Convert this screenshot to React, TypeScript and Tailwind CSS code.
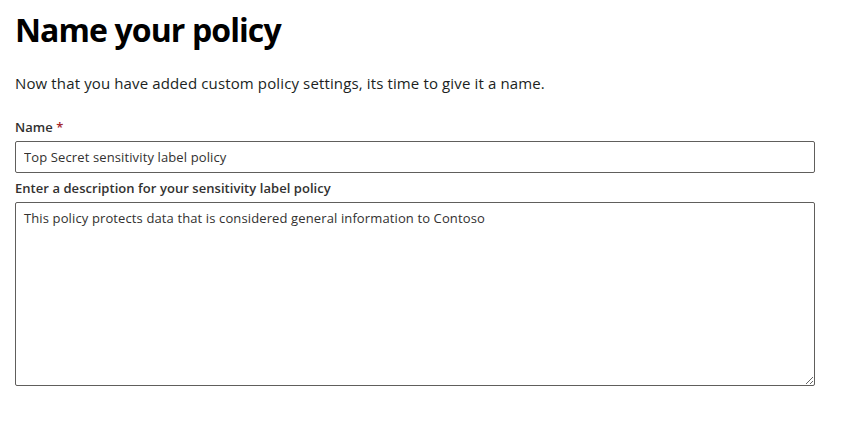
import React from "react";

const FONT = { fontFamily: '"Segoe UI", "Open Sans", "Noto Sans", sans-serif' };

export default function App() {
  return (
    <div className="w-[856px] h-[432px] bg-white text-[#000000]" style={FONT}>
      <div className="pl-[15px] pt-[8px] w-[816px]">
        <h1 className="text-[32px] leading-[44px] font-bold tracking-[-0.9px]">Name your policy</h1>
        <p className="mt-[21px] text-[15px] leading-[20px] tracking-[0.13px] text-[#201f1e]">
          Now that you have added custom policy settings, its time to give it a name.
        </p>

        {/* Name field */}
        <label className="block mt-[25px] text-[13px] leading-[18px] font-semibold tracking-[0.05px] text-[#323130]">
          Name <span className="text-[#a4262c]">*</span>
        </label>
        <input
          className="mt-[5px] block w-[800px] h-[32px] border border-[#605e5c] rounded-[2px] px-[8px] text-[13px] tracking-[0.12px] text-[#323130] outline-none"
          defaultValue="Top Secret sensitivity label policy"
        />

        {/* Description */}
        <label className="block mt-[6px] text-[13px] leading-[18px] font-semibold tracking-[0.05px] text-[#323130]">
          Enter a description for your sensitivity label policy
        </label>
        <textarea
          className="mt-[5px] block w-[800px] h-[184px] border border-[#605e5c] rounded-[2px] px-[8px] pt-[6px] text-[13px] leading-[18px] tracking-[0.12px] text-[#323130] outline-none resize-y"
          defaultValue="This policy protects data that is considered general information to Contoso"
        />
      </div>
    </div>
  );
}
